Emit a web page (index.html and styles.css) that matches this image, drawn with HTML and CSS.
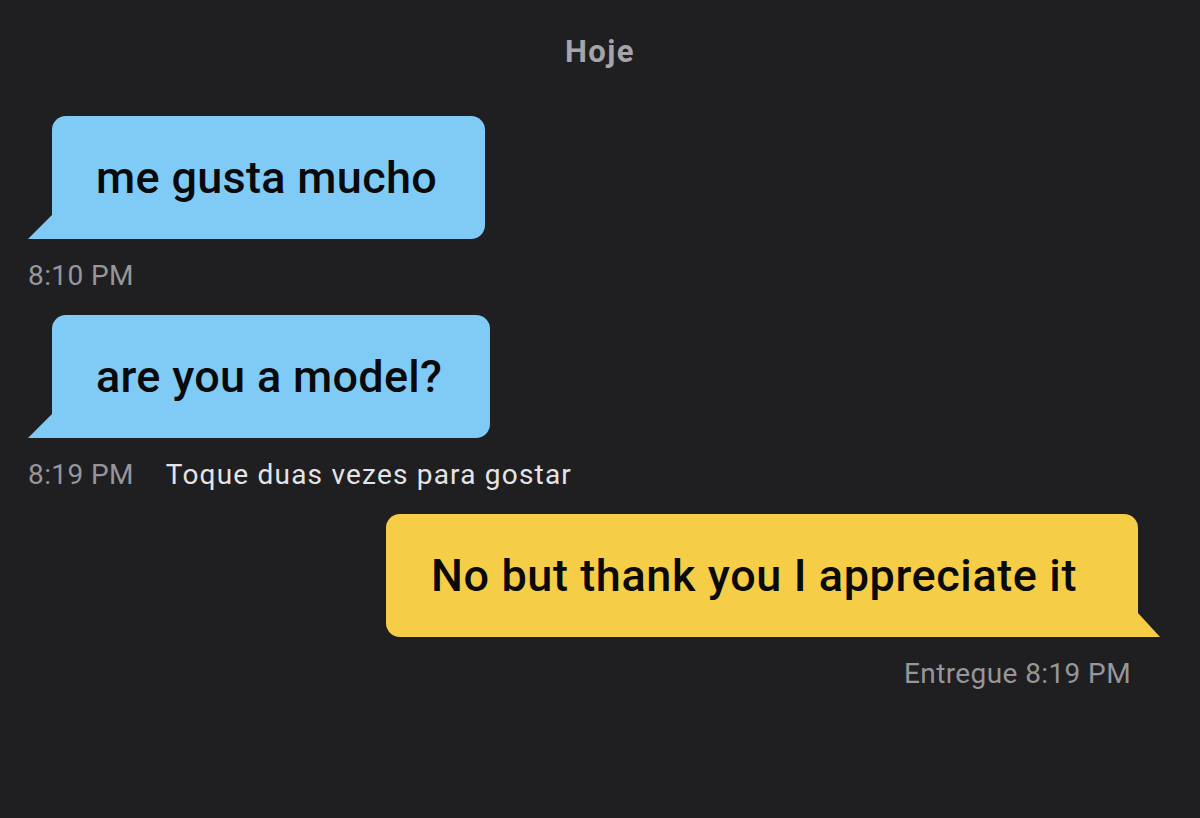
FILE: index.html
```html
<!DOCTYPE html>
<html lang="pt">
<head>
    <meta charset="UTF-8">
    <meta name="viewport" content="width=device-width, initial-scale=1.0">
    <title>Chat</title>
    <link rel="stylesheet" href="styles.css">
</head>
<body>
    <div class="chat">
        <div class="day-label">Hoje</div>

        <div class="message incoming">
            <div class="bubble">me gusta mucho</div>
            <div class="meta"><span class="time">8:10 PM</span></div>
        </div>

        <div class="message incoming">
            <div class="bubble">are you a model?</div>
            <div class="meta"><span class="time">8:19 PM</span><span class="hint">Toque duas vezes para gostar</span></div>
        </div>

        <div class="message outgoing">
            <div class="bubble">No but thank you I appreciate it</div>
            <div class="meta"><span class="time">Entregue 8:19 PM</span></div>
        </div>
    </div>
</body>
</html>
```

FILE: styles.css
```css
body {
    margin: 0;
    background-color: #1f1f21;
    font-family: Roboto, "Noto Sans", sans-serif;
    color: #e6e6e8;
}

.chat {
    display: flex;
    flex-direction: column;
    padding: 36px 62px 0 28px;
    min-height: 818px;
    box-sizing: border-box;
}

.day-label {
    text-align: center;
    font-size: 31px;
    font-weight: 700;
    letter-spacing: 1.5px;
    line-height: 32px;
    color: #a4a4aa;
    margin-bottom: 48px;
    padding-left: 34px;
}

.message {
    display: flex;
    flex-direction: column;
}

.message.incoming {
    align-items: flex-start;
}

.message.outgoing {
    align-items: flex-end;
}

.bubble {
    position: relative;
    height: 123px;
    box-sizing: border-box;
    display: flex;
    align-items: center;
    padding: 0 48px 0 44px;
    font-size: 45px;
    font-weight: 500;
    letter-spacing: 0.3px;
    color: #0a0a0c;
    border-radius: 14px;
}

.incoming .bubble {
    margin-left: 24px;
    background-color: #80cbf6;
    border-bottom-left-radius: 0;
}

.outgoing .bubble {
    background-color: #f5cd46;
    border-bottom-right-radius: 0;
    padding: 0 61px 0 45px;
    letter-spacing: 0.6px;
}

/* speech tail */
.bubble::before {
    content: "";
    position: absolute;
    bottom: 0;
    width: 24px;
    height: 24px;
}

.incoming .bubble::before {
    left: -24px;
    background-color: #80cbf6;
    clip-path: polygon(100% 0, 100% 100%, 0 100%);
}

.outgoing .bubble::before {
    right: -22px;
    width: 22px;
    background-color: #f5cd46;
    clip-path: polygon(0 0, 100% 100%, 0 100%);
}

.meta {
    display: flex;
    gap: 32px;
    font-size: 28px;
    line-height: 30px;
    margin: 22px 0 24px;
}

.outgoing .meta {
    padding-right: 7px;
}

.time {
    color: #96969c;
    letter-spacing: 0.4px;
}

.hint {
    color: #e4e4e6;
    letter-spacing: 1.2px;
}
```
